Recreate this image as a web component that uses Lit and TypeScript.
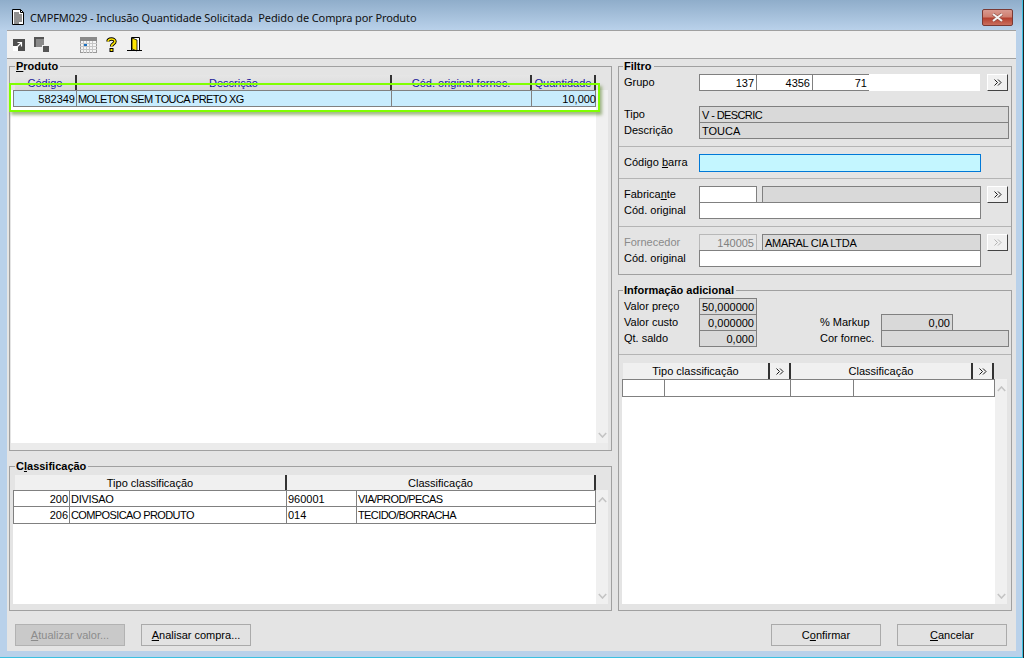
import { LitElement, html, css, svg } from "lit";
import { customElement } from "lit/decorators.js";

const dbl = (c = "#000") => html`<svg width="8" height="7" viewBox="0 0 8 7"><path d="M0.5 0.5 3.5 3.5 0.5 6.5M4 0.5 7 3.5 4 6.5" fill="none" stroke="${c}" stroke-width="0.9"/></svg>`;
const chev = (up: boolean) => html`<svg width="9" height="6" viewBox="0 0 9 6"><path d="${up ? "M0.8 5 4.5 1 8.2 5" : "M0.8 1 4.5 5 8.2 1"}" fill="none" stroke="#c4c4c4" stroke-width="1.6"/></svg>`;

@customElement("app-root")
export class AppRoot extends LitElement {
  static styles = css`
    :host { display: block; width: 1024px; height: 658px; overflow: hidden; font: 11px "Liberation Sans", Arial, sans-serif; color: #000; background: #222; }
    .win { border-bottom: 1px solid #3cc0e0; border-right: 1px solid #3cc0e0; display: flex; flex-direction: column; padding: 0 6px 6px 7px; box-sizing: content-box; height: 651px; width: 1009px;
      background: linear-gradient(#8fadca 0, #b9d1ea 30px, #b9d1ea 100%); }
    .title { height: 30px; flex: none; display: flex; align-items: center; padding-top: 5px; box-sizing: border-box; }
    .tname { margin-left: 5px; font: 11px "Noto Sans", sans-serif; color: #111; letter-spacing: -0.11px; white-space: pre; }
    .ticon { margin-left: 4px; display: block; }
    .close { margin-left: auto; margin-right: 3px; width: 31px; height: 17px; box-sizing: border-box; border: 1px solid #7a3a34; border-radius: 2px; background: linear-gradient(#d99a90 0, #cf7f70 45%, #b5402f 55%, #c96f5e 100%); display: flex; align-items: center; justify-content: center; }
    .client { flex: 1; display: flex; flex-direction: column; background: #e4e4e4; border-top: 1px solid #a0a0a0; }
    .tools { height: 27px; flex: none; background: #f0f0f0; border-bottom: 1px solid #a0a0a0; display: flex; align-items: center; padding-left: 6px; box-sizing: content-box; }
    .tools svg { display: block; flex: none; }
    .i2 { margin-left: 8px; } .i3 { margin-left: 31px; } .i4 { margin-left: 9px; } .i5 { margin-left: 10px; }
    .main { height: 552px; flex: none; display: flex; padding: 7px 4px 0 2px; box-sizing: border-box; gap: 6px; }
    .left { width: 603px; flex: none; display: flex; flex-direction: column; gap: 15px; }
    .right { width: 394px; flex: none; display: flex; flex-direction: column; gap: 15px; }
    .group { position: relative; border: 1px solid #a0a0a0; box-sizing: border-box; display: flex; flex-direction: column; }
    .legend { position: absolute; left: 5px; top: -7px; background: #e4e4e4; padding: 0 2px 0 1px; font-weight: bold; font-size: 11px; line-height: 13px; }
    .right .legend { left: 4px; }
    .produto { height: 385px; padding: 8px 2px 0 1px; }
    .gh { display: grid; height: 15px; flex: none; margin-left: 4px; width: 581px; grid-template-columns: 62px 315px 140px 64px; color: #20209a; background: linear-gradient(#e6e6e6, #d8d8d8); }
    .gh div { border-right: 2px solid #333; text-align: center; line-height: 17px; box-sizing: border-box; white-space: nowrap; overflow: hidden; }
    .pbody { flex: 1; display: flex; min-height: 0; }
    .list { flex: none; width: 585px; background: #fff; padding-left: 2px; box-sizing: border-box; }
    .sb { flex: none; width: 12px; background: #f0f0f0; display: flex; flex-direction: column; justify-content: space-between; align-items: center; padding: 7px 0 5px; box-sizing: border-box; }
    .strip { height: 7px; flex: none; background: #ebebeb; width: 597px; }
    .prow { display: grid; width: 583px; height: 17px; box-sizing: border-box; grid-template-columns: 63px 315px 140px 65px; background: #c8ecfd; border: 1px solid #808080; line-height: 17px; }
    .prow div, .crow div { border-right: 1px solid #808080; padding: 0 1px; box-sizing: border-box; white-space: nowrap; overflow: hidden; }
    .prow div:last-child, .crow div:last-child { border-right: 0; }
    .r { text-align: right; }
    .c6 { letter-spacing: -0.6px; } .c3 { letter-spacing: -0.3px; }
    .green { position: absolute; left: -1px; top: 16px; width: 591px; height: 29px; box-sizing: border-box; border: 2px solid #7fff00; box-shadow: 2px 3px 3px rgba(90, 130, 40, 0.55); pointer-events: none; }
    .classif { height: 145px; padding: 8px 2px 6px 3px; }
    .ch { display: grid; height: 15px; flex: none; margin-left: 2px; width: 581px; grid-template-columns: 272px 309px; background: #f0f0f0; }
    .ch div { border-right: 2px solid #333; text-align: center; line-height: 17px; box-sizing: border-box; }
    .clist { flex: none; width: 583px; background: #fff; }
    .crow { display: grid; height: 17px; box-sizing: border-box; grid-template-columns: 56px 217px 70px 1fr; border: 1px solid #808080; border-top: 0; line-height: 16px; }
    .crow.first { border-top: 1px solid #808080; line-height: 17px; }
    .filtro { height: 209px; }
    .sec { border-bottom: 1px solid #b4b4b4; padding: 7px 0 0 5px; box-sizing: border-box; flex: none; }
    .sec.last { border-bottom: 0; }
    .h80 { height: 80px; } .h32 { height: 32px; } .h48 { height: 48px; } .h47 { height: 47px; } .h64 { height: 64px; }
    .row { display: flex; height: 17px; line-height: 17px; }
    .row + .row { margin-top: -1px; }
    .row.gap { margin-top: 15px; }
    .row.gap + .row { margin-top: -1px; }
    .lab { width: 75px; flex: none; white-space: nowrap; }
    .dis { color: #8a8a8a; }
    .f { box-sizing: border-box; border: 1px solid #808080; height: 17px; background: #fff; padding: 0 2px; line-height: 16px; white-space: nowrap; overflow: hidden; flex: none; }
    .g { background: #d9d9d9; }
    .fd { background: #e6e6e6; border-color: #b8b8b8; color: #808080; }
    .tr { text-align: right; }
    .w58 { width: 58px; } .w57 { width: 57px; } .w310 { width: 310px; } .w282 { width: 282px; } .w219 { width: 219px; } .w72 { width: 72px; } .w128 { width: 128px; }
    .lap { margin-left: -1px; }
    .ml5 { margin-left: 5px; }
    .grow { background: #fff; width: 111px; height: 17px; flex: none; box-sizing: border-box; margin: 0 1px 0 -1px; }
    .btn { width: 21px; height: 17px; flex: none; box-sizing: border-box; background: #f0f0f0; border: 1px solid; border-color: #fff #444 #444 #fff; display: flex; align-items: center; justify-content: center; margin-left: 6px; }
    .bar { height: 18px; width: 282px; box-sizing: border-box; border: 1px solid #0078d7; background: #c4f6ff; }
    .mk { width: 61px; margin-left: 63px; flex: none; white-space: nowrap; }
    .info { flex: 1; min-height: 0; }
    .tb { flex: 1; display: flex; flex-direction: column; padding: 8px 0 6px 3px; min-height: 0; }
    .th { display: grid; height: 16px; flex: none; width: 371px; margin-left: 1px; grid-template-columns: 147px 21px 182px 21px; background: #f0f0f0; }
    .th div { border-right: 2px solid #333; text-align: center; line-height: 16px; box-sizing: border-box; display: flex; align-items: center; justify-content: center; }
    .tbody { flex: 1; display: flex; min-height: 0; }
    .tlist { width: 373px; flex: none; background: #fff; }
    .trow { display: grid; height: 18px; box-sizing: border-box; grid-template-columns: 42px 126px 63px 1fr; border: 1px solid #808080; }
    .trow div { border-right: 1px solid #808080; }
    .trow div:last-child { border-right: 0; }
    .foot { flex: 1; display: flex; padding: 13px 9px 0 8px; gap: 16px; box-sizing: border-box; }
    .b { width: 110px; height: 22px; box-sizing: border-box; border: 1px solid #aaa; background: #e2e2e2; text-align: center; line-height: 20px; flex: none; }
    .b.off { background: #c9c9c9; color: #8c8c8c; border-color: #b2b2b2; }
    .sp { flex: 1; }
    u { text-decoration-thickness: 1px; text-underline-offset: 1px; }
  `;

  render() {
    return html`<div class="win">
      <div class="title">
        <svg class="ticon" width="14" height="17" viewBox="0 0 14 17"><path d="M1.5.5H9.5L12.5 3.5V15.5H1.5Z" fill="#fff" stroke="#000"/><path d="M9.5.5V3.5H12.5" fill="none" stroke="#000"/><path d="M3 4H8M3 6H11M3 8H11M3 10H11M3 12H11M3 14H8" stroke="#222"/></svg>
        <span class="tname">CMPFM029 - Inclusão Quantidade Solicitada  Pedido de Compra por Produto</span>
        <div class="close"><svg width="13" height="9" viewBox="0 0 13 9"><path d="M2 1 11 8M11 1 2 8" stroke="#8a4a40" stroke-width="3.2"/><path d="M2 1 11 8M11 1 2 8" stroke="#f4f0ee" stroke-width="2.2"/></svg></div>
      </div>
      <div class="client">
        <div class="tools">
          <svg width="13" height="14" viewBox="0 0 13 14"><rect x="0" y="1" width="12" height="12" fill="#4e4e4e"/><rect x="0" y="8" width="5" height="5" fill="#fff"/><path d="M2 11 8 5M4.5 4.5H8.5V8.5" fill="none" stroke="#fff" stroke-width="1.2"/></svg>
          <svg class="i2" width="15" height="15" viewBox="0 0 15 15"><path d="M0 0H10V2H2V10H0Z" fill="#555"/><path d="M2 2H10V8H8V10H2Z" fill="#8a8a8a"/><rect x="9" y="9" width="6" height="6" fill="#555"/></svg>
          <svg class="i3" width="17" height="16" viewBox="0 0 17 16"><rect x=".5" y=".5" width="16" height="15" fill="#f4f4f4" stroke="#9a9a9a"/><rect x="0" y="0" width="17" height="4" fill="#8a8a8a"/>${[3.5, 6.5, 9.5, 12.5].map((x) => svg`<path d="M${x} 4V16" stroke="#c6c6c6"/>`)}${[6.5, 9.5, 12.5].map((y) => svg`<path d="M0 ${y}H17" stroke="#c6c6c6"/>`)}<rect x="4" y="7" width="3" height="2" fill="#1a6fc0"/></svg>
          <svg class="i4" width="11" height="15" viewBox="0 0 11 15"><path d="M2 4.5C2 1.5 9 1 9 4.5 9 7 5.5 6.5 5.5 9.5" fill="none" stroke="#000" stroke-width="3.4"/><path d="M2 4.5C2 1.5 9 1 9 4.5 9 7 5.5 6.5 5.5 9.5" fill="none" stroke="#ffe600" stroke-width="1.6"/><rect x="3.5" y="11" width="4" height="4" fill="#000"/><rect x="4.5" y="12" width="2" height="2" fill="#ffe600"/></svg>
          <svg class="i5" width="16" height="15" viewBox="0 0 16 15"><path d="M4.5 13V.5H12.5V13" fill="#fff" stroke="#000"/><path d="M5 1 10 3V14L5 12Z" fill="#ffe600" stroke="#000" stroke-width=".8"/><path d="M0 13.5H15" stroke="#000"/></svg>
        </div>
        <div class="main">
          <div class="left">
            <div class="group produto">
              <div class="legend"><u>P</u>roduto</div>
              <div class="gh"><div>Código</div><div>Descrição</div><div>Cód. original fornec.</div><div>Quantidade</div></div>
              <div class="pbody">
                <div class="list"><div class="prow"><div class="r">582349</div><div class="c6">MOLETON SEM TOUCA PRETO XG</div><div></div><div class="r">10,000</div></div></div>
                <div class="sb"><span></span>${chev(false)}</div>
              </div>
              <div class="strip"></div>
              <div class="green"></div>
            </div>
            <div class="group classif">
              <div class="legend">C<u>l</u>assificação</div>
              <div class="ch"><div>Tipo classificação</div><div>Classificação</div></div>
              <div class="pbody">
                <div class="clist">
                  <div class="crow first"><div class="r">200</div><div class="c3">DIVISAO</div><div>960001</div><div class="c6">VIA/PROD/PECAS</div></div>
                  <div class="crow"><div class="r">206</div><div class="c6">COMPOSICAO PRODUTO</div><div>014</div><div class="c6">TECIDO/BORRACHA</div></div>
                </div>
                <div class="sb">${chev(true)}${chev(false)}</div>
              </div>
            </div>
          </div>
          <div class="right">
            <div class="group filtro">
              <div class="legend">Filtro</div>
              <div class="sec h80">
                <div class="row"><span class="lab">Grupo</span><div class="f tr w58">137</div><div class="f tr w57 lap">4356</div><div class="f tr w58 lap">71</div><div class="grow"></div><div class="btn">${dbl()}</div></div>
                <div class="row gap"><span class="lab">Tipo</span><div class="f g w310 c6">V - DESCRIC</div></div>
                <div class="row"><span class="lab">Descrição</span><div class="f g w310">TOUCA</div></div>
              </div>
              <div class="sec h32"><div class="row"><span class="lab">Código <u>b</u>arra</span><div class="bar"></div></div></div>
              <div class="sec h48">
                <div class="row"><span class="lab">Fabrica<u>n</u>te</span><div class="f w58"></div><div class="f g w219 ml5"></div><div class="btn">${dbl()}</div></div>
                <div class="row"><span class="lab">Cód. original</span><div class="f w282"></div></div>
              </div>
              <div class="sec h47 last">
                <div class="row"><span class="lab dis">Fornecedor</span><div class="f fd tr w58">140005</div><div class="f g w219 ml5 c3">AMARAL CIA LTDA</div><div class="btn">${dbl("#aaa")}</div></div>
                <div class="row"><span class="lab">Cód. original</span><div class="f w282"></div></div>
              </div>
            </div>
            <div class="group info">
              <div class="legend">Informação adicional</div>
              <div class="sec h64">
                <div class="row"><span class="lab">Valor preço</span><div class="f g tr w58">50,000000</div></div>
                <div class="row"><span class="lab">Valor custo</span><div class="f g tr w58">0,000000</div><span class="mk">% Markup</span><div class="f g tr w72">0,00</div></div>
                <div class="row"><span class="lab">Qt. saldo</span><div class="f g tr w58">0,000</div><span class="mk">Cor fornec.</span><div class="f g w128"></div></div>
              </div>
              <div class="tb">
                <div class="th"><div>Tipo classificação</div><div>${dbl()}</div><div>Classificação</div><div>${dbl()}</div></div>
                <div class="tbody">
                  <div class="tlist"><div class="trow"><div></div><div></div><div></div><div></div></div></div>
                  <div class="sb">${chev(true)}${chev(false)}</div>
                </div>
              </div>
            </div>
          </div>
        </div>
        <div class="foot">
          <div class="b off"><u>A</u>tualizar valor...</div>
          <div class="b"><u>A</u>nalisar compra...</div>
          <div class="sp"></div>
          <div class="b">C<u>o</u>nfirmar</div>
          <div class="b"><u>C</u>ancelar</div>
        </div>
      </div>
    </div>`;
  }
}
